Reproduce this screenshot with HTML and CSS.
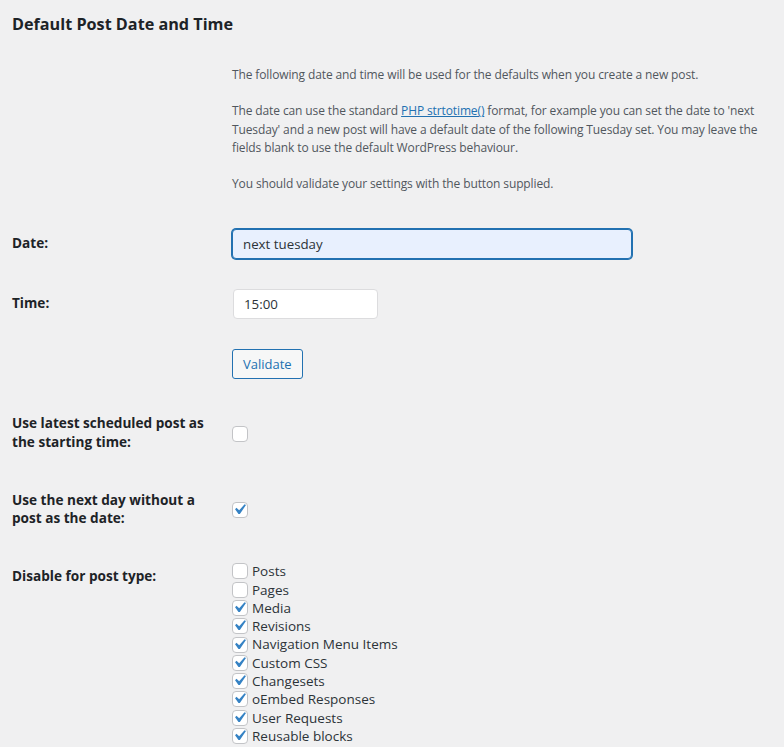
FILE: index.html
```html
<!DOCTYPE html>
<html lang="en">
<head>
<meta charset="utf-8">
<title>Default Post Date and Time</title>
<link rel="stylesheet" href="styles.css">
</head>
<body>
<div class="wrap">
  <h2 class="title">Default Post Date and Time</h2>
  <table class="form-table">
    <tr>
      <th></th>
      <td class="desc-cell">
        <p class="desc">The following date and time will be used for the defaults when you create a new post.</p>
        <p class="desc">The date can use the standard <a href="#">PHP strtotime()</a> format, for example you can set the date to 'next Tuesday' and a new post will have a default date of the following Tuesday set. You may leave the fields blank to use the default WordPress behaviour.</p>
        <p class="desc">You should validate your settings with the button supplied.</p>
      </td>
    </tr>
    <tr>
      <th><label for="date">Date:</label></th>
      <td><input id="date" class="text-input date-input" type="text" value="next tuesday"></td>
    </tr>
    <tr>
      <th><label for="time">Time:</label></th>
      <td><input id="time" class="text-input time-input" type="text" value="15:00"></td>
    </tr>
    <tr>
      <th></th>
      <td><button class="button" type="button">Validate</button></td>
    </tr>
    <tr>
      <th>Use latest scheduled post as the starting time:</th>
      <td><span class="cb"></span></td>
    </tr>
    <tr>
      <th>Use the next day without a post as the date:</th>
      <td><span class="cb checked"><svg viewBox="0 0 20 20"><path d="M14.83 4.89l1.34.94-5.81 8.38H9.02L5.780 9.67l1.34-1.25 2.57 2.4z"/></svg></span></td>
    </tr>
    <tr>
      <th>Disable for post type:</th>
      <td>
        <ul class="types">
          <li><span class="cb"></span>Posts</li>
          <li><span class="cb"></span>Pages</li>
          <li><span class="cb checked"><svg viewBox="0 0 20 20"><path d="M14.83 4.89l1.34.94-5.81 8.38H9.02L5.78 9.67l1.34-1.25 2.57 2.4z"/></svg></span>Media</li>
          <li><span class="cb checked"><svg viewBox="0 0 20 20"><path d="M14.83 4.89l1.34.94-5.81 8.38H9.02L5.78 9.67l1.34-1.25 2.57 2.4z"/></svg></span>Revisions</li>
          <li><span class="cb checked"><svg viewBox="0 0 20 20"><path d="M14.83 4.89l1.34.94-5.81 8.38H9.02L5.78 9.67l1.34-1.25 2.57 2.4z"/></svg></span>Navigation Menu Items</li>
          <li><span class="cb checked"><svg viewBox="0 0 20 20"><path d="M14.83 4.89l1.34.94-5.81 8.38H9.02L5.78 9.67l1.34-1.25 2.57 2.4z"/></svg></span>Custom CSS</li>
          <li><span class="cb checked"><svg viewBox="0 0 20 20"><path d="M14.83 4.89l1.34.94-5.81 8.38H9.02L5.78 9.67l1.34-1.25 2.57 2.4z"/></svg></span>Changesets</li>
          <li><span class="cb checked"><svg viewBox="0 0 20 20"><path d="M14.83 4.89l1.34.94-5.81 8.38H9.02L5.78 9.67l1.34-1.25 2.57 2.4z"/></svg></span>oEmbed Responses</li>
          <li><span class="cb checked"><svg viewBox="0 0 20 20"><path d="M14.83 4.89l1.34.94-5.81 8.38H9.02L5.78 9.67l1.34-1.25 2.57 2.4z"/></svg></span>User Requests</li>
          <li><span class="cb checked"><svg viewBox="0 0 20 20"><path d="M14.83 4.89l1.34.94-5.81 8.38H9.02L5.78 9.67l1.34-1.25 2.57 2.4z"/></svg></span>Reusable blocks</li>
        </ul>
      </td>
    </tr>
  </table>
</div>
</body>
</html>
```
FILE: styles.css
```css
html, body {
  margin: 0;
  padding: 0;
  background: #f0f0f1;
}
body {
  font-family: "Open Sans", "Noto Sans", sans-serif;
  font-size: 13px;
  color: #1d2327;
}
.wrap {
  padding: 0 12px;
}
.title {
  margin: 0;
  padding-top: 12px;
  height: 51px;
  box-sizing: border-box;
  font-size: 16.2px;
  line-height: 24px;
  font-weight: 700;
  color: #1d2327;
}
.form-table {
  border-collapse: collapse;
  border-spacing: 0;
  width: 100%;
}
.form-table th {
  width: 200px;
  padding: 20px 10px 20px 0;
  text-align: left;
  vertical-align: top;
  font-size: 13.6px;
  line-height: 18.2px;
  font-weight: 700;
  color: #1d2327;
}
.form-table td {
  padding: 15px 10px;
  vertical-align: middle;
  line-height: 18.2px;
}
.form-table td.desc-cell {
  padding-bottom: 21px;
}
.desc {
  margin: 0 0 18.2px;
  color: #50575e;
  font-size: 12px;
  letter-spacing: -0.12px;
}
.desc:last-child {
  margin-bottom: 0;
}
.desc a {
  color: #2271b1;
  text-decoration: underline;
}
.text-input {
  display: block;
  box-sizing: border-box;
  height: 30px;
  margin: 0;
  padding: 0 10px;
  font-family: inherit;
  font-size: 13.3px;
  color: #2c3338;
  border-radius: 4px;
  outline: none;
}
.date-input {
  width: 400px;
  background: #e8f0fe;
  border: 1px solid #2271b1;
  box-shadow: 0 0 0 1px #2271b1;
}
.time-input {
  width: 145px;
  margin-left: 1px;
  background: #fff;
  border: 1px solid #dcdcde;
}
.button {
  display: block;
  height: 30px;
  box-sizing: border-box;
  padding: 0 10px;
  font-family: inherit;
  font-size: 13px;
  color: #2271b1;
  background: #f6f7f7;
  border: 1px solid #2271b1;
  border-radius: 3px;
  cursor: pointer;
}
.cb {
  display: inline-block;
  position: relative;
  width: 16px;
  height: 16px;
  box-sizing: border-box;
  border: 1px solid #c3c4c7;
  border-radius: 4px;
  background: #fff;
  vertical-align: middle;
}
.cb svg {
  position: absolute;
  left: -4px;
  top: -4px;
  width: 21px;
  height: 21px;
  fill: #3582c4;
}
.types {
  list-style: none;
  margin: 0;
  padding: 0;
}
.types li {
  display: flex;
  align-items: center;
  gap: 4px;
  height: 18.3px;
  font-size: 13.5px;
  color: #2c3338;
}
```
